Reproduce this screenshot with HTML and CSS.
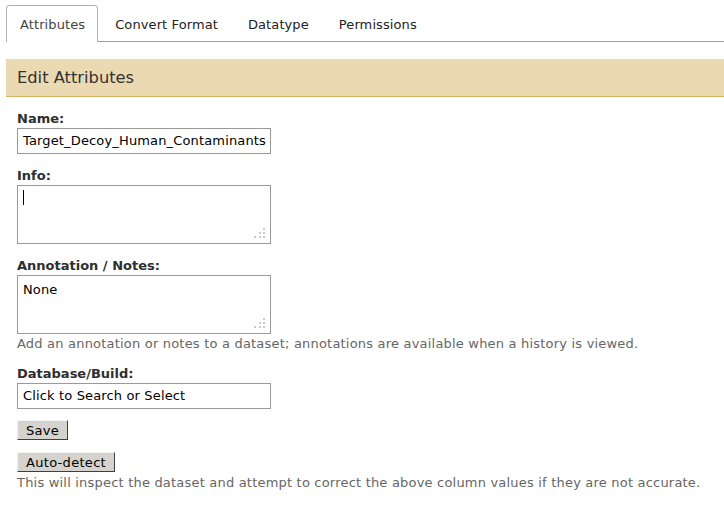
FILE: index.html
```html
<!DOCTYPE html>
<html>
<head>
<meta charset="utf-8">
<link rel="stylesheet" href="styles.css">
</head>
<body>
<div class="page">
  <ul class="tabs">
    <li class="tab active">Attributes</li>
    <li class="tab">Convert Format</li>
    <li class="tab">Datatype</li>
    <li class="tab">Permissions</li>
  </ul>
  <div class="panel">
    <div class="panel-header">Edit Attributes</div>
    <form class="panel-body">
      <div class="row">
        <label class="lbl">Name:</label>
        <div class="field">Target_Decoy_Human_Contaminants</div>
      </div>
      <div class="row">
        <label class="lbl">Info:</label>
        <div class="area"><span class="caret"></span>
          <svg class="grip" width="12" height="12" viewBox="0 0 12 12"><g fill="#c8c8c8"><rect x="9" y="0" width="2" height="2"/><rect x="5" y="4" width="2" height="2"/><rect x="9" y="4" width="2" height="2"/><rect x="0" y="8" width="2" height="2"/><rect x="5" y="8" width="2" height="2"/><rect x="9" y="8" width="2" height="2"/></g></svg>
        </div>
      </div>
      <div class="row">
        <label class="lbl">Annotation / Notes:</label>
        <div class="area"><span class="val">None</span>
          <svg class="grip" width="12" height="12" viewBox="0 0 12 12"><g fill="#c8c8c8"><rect x="9" y="0" width="2" height="2"/><rect x="5" y="4" width="2" height="2"/><rect x="9" y="4" width="2" height="2"/><rect x="0" y="8" width="2" height="2"/><rect x="5" y="8" width="2" height="2"/><rect x="9" y="8" width="2" height="2"/></g></svg>
        </div>
        <div class="help">Add an annotation or notes to a dataset; annotations are available when a history is viewed.</div>
      </div>
      <div class="row db-row">
        <label class="lbl">Database/Build:</label>
        <div class="field">Click to Search or Select</div>
      </div>
      <div class="row btn-row">
        <button type="button" class="btn">Save</button>
      </div>
      <div class="row last">
        <button type="button" class="btn">Auto-detect</button>
        <div class="help last-help">This will inspect the dataset and attempt to correct the above column values if they are not accurate.</div>
      </div>
    </form>
  </div>
</div>
</body>
</html>
```
FILE: styles.css
```css
html, body { margin: 0; padding: 0; background: #fff; }
body {
  font-family: "DejaVu Sans", Verdana, sans-serif;
  font-size: 13px;
  color: #333;
}
.page { padding: 5px 0 0 6px; }
.tabs {
  list-style: none;
  margin: 0;
  padding: 0;
  display: flex;
  border-bottom: 1px solid #a0a0a0;
  height: 36px;
}
.tab {
  font-size: 13px;
  letter-spacing: 0.1px;
  line-height: 37px;
  padding: 0 12px 0 13px;
  color: #222;
  border: 1px solid transparent;
  border-bottom: none;
  margin-right: 3px;
}
.tab.active {
  border-color: #b0b0b0;
  border-radius: 4px 4px 0 0;
  background: #fff;
  height: 36px;
  color: #444;
}
.panel { margin-top: 17px; }
.panel-header {
  background: #ebd9b2;
  border-bottom: 1px solid #d8b365;
  height: 37px;
  line-height: 37px;
  font-size: 16.3px;
  padding-left: 11px;
  color: #333;
}
.panel-body { padding: 14px 0 0 11px; }
.row { margin-bottom: 14px; }
.row.db-row { margin-bottom: 11px; }
.row.btn-row { margin-bottom: 12px; }
.row.last { margin-bottom: 0; }
.lbl {
  display: block;
  font-weight: bold;
  font-size: 13px;
  line-height: 15px;
  margin-bottom: 2px;
  color: #2e2e2e;
}
.field {
  width: 242px;
  height: 24px;
  line-height: 24px;
  border: 1px solid #999;
  padding: 0 5px;
  font-size: 13px;
  letter-spacing: 0.15px;
  color: #000;
  white-space: nowrap;
  overflow: hidden;
}
.area {
  position: relative;
  width: 252px;
  height: 57px;
  border: 1px solid #999;
}
.area .val {
  position: absolute;
  left: 5px;
  top: 6px;
  font-size: 13px;
  letter-spacing: 0.15px;
  color: #000;
}
.caret {
  position: absolute;
  left: 5px;
  top: 4px;
  width: 1px;
  height: 15px;
  background: #000;
}
.grip {
  position: absolute;
  right: 4px;
  bottom: 3px;
  display: block;
}
.help {
  color: #666;
  font-size: 13px;
  letter-spacing: 0.2px;
  line-height: 16px;
  margin-top: 2px;
}
.help.last-help { margin-top: 3px; }
.btn {
  font-family: "DejaVu Sans", Verdana, sans-serif;
  font-size: 13px;
  letter-spacing: 0.3px;
  color: #000;
  background: #d6d3ce;
  border: 1px solid;
  border-color: #f4f4f4 #404040 #404040 #f4f4f4;
  padding: 0 8px;
  height: 20px;
  line-height: 17px;
  margin: 0;
  display: block;
}
```
